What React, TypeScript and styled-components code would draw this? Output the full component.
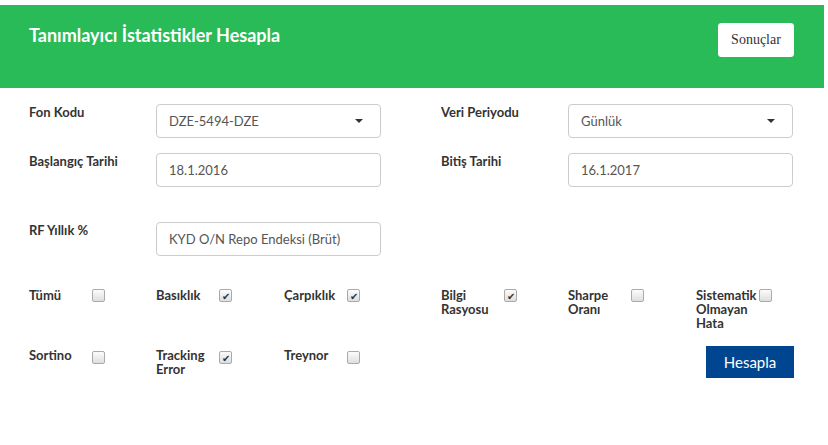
import React from "react";
import styled, { createGlobalStyle } from "styled-components";

const Global = createGlobalStyle`
  html, body { margin: 0; padding: 0; background: #fff; }
  body { font-family: Lato, "Open Sans", sans-serif; color: #333; }
  * { box-sizing: border-box; }
`;

const Page = styled.div`
  width: 828px;
  padding-top: 5px;
`;

const Header = styled.header`
  width: 824px;
  height: 83px;
  background: #29bb57;
  display: flex;
  justify-content: space-between;
  align-items: flex-start;
  padding: 0 30px 0 29px;
`;

const Title = styled.h1`
  margin: 0;
  padding-top: 19px;
  font-size: 18px;
  line-height: 22px;
  font-weight: 700;
  color: #fff;
`;

const ResultsButton = styled.button`
  margin-top: 18px;
  width: 76px;
  height: 34px;
  background: #fff;
  border: 1px solid #fff;
  border-radius: 3px;
  font-family: "Liberation Serif", serif;
  font-size: 14px;
  color: #333;
  padding: 0;
`;

const Form = styled.div`
  padding-top: 16px;
`;

const Row = styled.div<{ $mt?: number }>`
  display: flex;
  margin-top: ${(p) => p.$mt ?? 0}px;
`;

const Half = styled.div<{ $pl: number }>`
  width: 414px;
  padding-left: ${(p) => p.$pl}px;
`;

const FieldRow = styled.div`
  display: grid;
  grid-template-columns: 127px 225px;
  align-items: start;
`;

const Label = styled.label`
  font-size: 13px;
  font-weight: 700;
  line-height: 14px;
  color: #333;
  padding-top: 1px;
`;

const Box = styled.div`
  height: 34px;
  border: 1px solid #ccc;
  border-radius: 4px;
  display: flex;
  align-items: center;
  justify-content: space-between;
  padding: 0 13px 0 12px;
  font-size: 13px;
  color: #555;
  background: #fff;
`;

const Caret = styled.span`
  width: 0;
  height: 0;
  border-left: 4px solid transparent;
  border-right: 4px solid transparent;
  border-top: 4px solid #333;
  margin-right: 4px;
`;

const CheckGrid = styled.div`
  display: grid;
  grid-template-columns: 127px 128px 128px;
  align-items: start;
`;

const CheckItem = styled.div`
  display: flex;
  align-items: flex-start;
`;

const CheckLabel = styled.span`
  width: 63px;
  font-size: 13px;
  font-weight: 700;
  line-height: 14px;
  color: #333;
  white-space: normal;
`;

const CheckBox = styled.span<{ $top: number }>`
  width: 13px;
  height: 13px;
  margin-top: ${(p) => p.$top}px;
  border: 1px solid #aaa;
  border-radius: 2px;
  background: linear-gradient(#fcfcfc, #dedede);
  display: flex;
  align-items: center;
  justify-content: center;
  font-size: 10px;
  line-height: 1;
  color: #333;
  flex: none;
`;

const ActionRow = styled.div`
  display: flex;
  justify-content: flex-end;
  padding-right: 34px;
`;

const Compute = styled.button`
  width: 88px;
  height: 32px;
  margin-top: -2px;
  background: #00458f;
  border: none;
  color: #fff;
  font-family: Lato, "Open Sans", sans-serif;
  font-size: 15px;
  padding: 0;
`;

const Check = ({ label, checked, top = 1 }: { label: React.ReactNode; checked?: boolean; top?: number }) => (
  <CheckItem>
    <CheckLabel>{label}</CheckLabel>
    <CheckBox $top={top}>{checked ? "✔" : ""}</CheckBox>
  </CheckItem>
);

export default function App() {
  return (
    <Page>
      <Global />
      <Header>
        <Title>Tanımlayıcı İstatistikler Hesapla</Title>
        <ResultsButton>Sonuçlar</ResultsButton>
      </Header>
      <Form>
        <Row>
          <Half $pl={29}>
            <FieldRow>
              <Label>Fon Kodu</Label>
              <Box>DZE-5494-DZE<Caret /></Box>
            </FieldRow>
          </Half>
          <Half $pl={27}>
            <FieldRow>
              <Label>Veri Periyodu</Label>
              <Box>Günlük<Caret /></Box>
            </FieldRow>
          </Half>
        </Row>
        <Row $mt={15}>
          <Half $pl={29}>
            <FieldRow>
              <Label>Başlangıç Tarihi</Label>
              <Box>18.1.2016</Box>
            </FieldRow>
          </Half>
          <Half $pl={27}>
            <FieldRow>
              <Label>Bitiş Tarihi</Label>
              <Box>16.1.2017</Box>
            </FieldRow>
          </Half>
        </Row>
        <Row $mt={35}>
          <Half $pl={29}>
            <FieldRow>
              <Label>RF Yıllık %</Label>
              <Box>KYD O/N Repo Endeksi (Brüt)</Box>
            </FieldRow>
          </Half>
        </Row>
        <Row $mt={32}>
          <Half $pl={29}>
            <CheckGrid>
              <Check label="Tümü" />
              <Check label="Basıklık" checked />
              <Check label="Çarpıklık" checked />
            </CheckGrid>
          </Half>
          <Half $pl={27}>
            <CheckGrid>
              <Check label="Bilgi Rasyosu" checked />
              <Check label="Sharpe Oranı" />
              <Check label="Sistematik Olmayan Hata" />
            </CheckGrid>
          </Half>
        </Row>
        <Row $mt={18}>
          <Half $pl={29}>
            <CheckGrid>
              <Check label="Sortino" top={3} />
              <Check label="Tracking Error" checked top={3} />
              <Check label="Treynor" top={3} />
            </CheckGrid>
          </Half>
          <Half $pl={27}>
            <ActionRow>
              <Compute>Hesapla</Compute>
            </ActionRow>
          </Half>
        </Row>
      </Form>
    </Page>
  );
}
